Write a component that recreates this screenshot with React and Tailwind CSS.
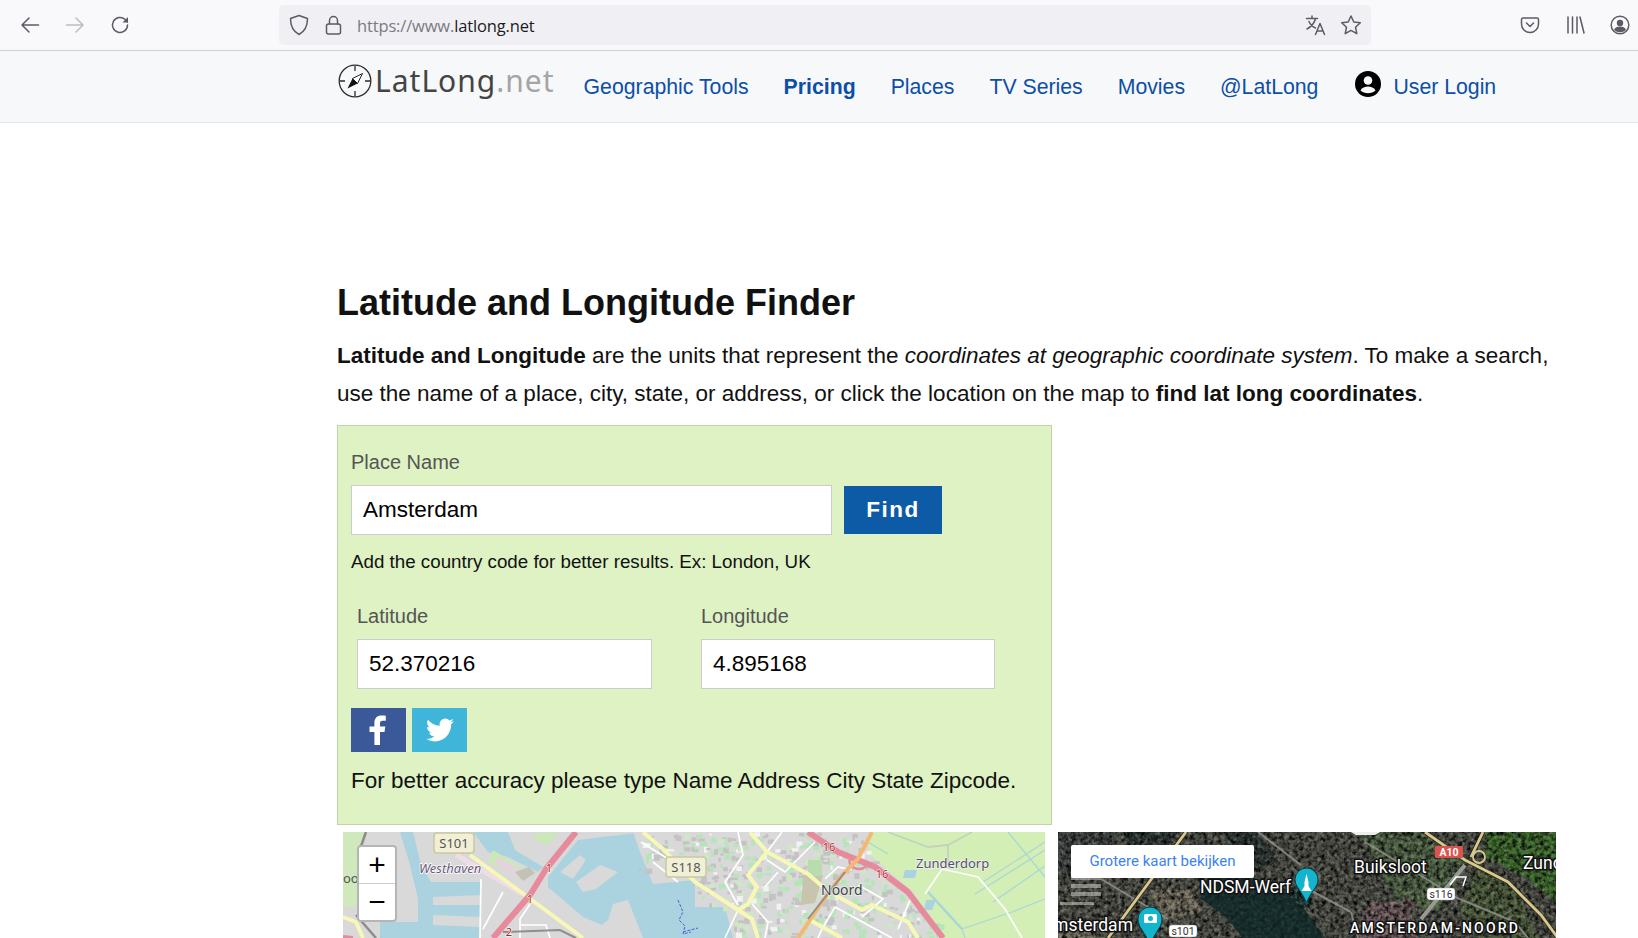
import React from "react";

const sans = "font-['Liberation_Sans',Arial,sans-serif]";

function Toolbar() {
  const s = { fill: "none", stroke: "#5b5b66", strokeWidth: 1.5, strokeLinecap: "round", strokeLinejoin: "round" };
  return (
    <div className="flex h-[51px] items-center border-b border-[#cfcfd4] bg-[#f9f9fb]">
      <div className="flex w-[279px] shrink-0 items-center pl-[20px]">
        <svg width="20" height="20" viewBox="0 0 20 20" {...s}><path d="M18.5 10H2M9 3 2 10l7 7" /></svg>
        <svg className="ml-[25px]" width="20" height="20" viewBox="0 0 20 20" {...s} stroke="#bdbdc2"><path d="M1.5 10H18M11 3l7 7-7 7" /></svg>
        <svg className="ml-[25px]" width="20" height="20" viewBox="0 0 20 20" {...s}><path d="M17.5 10a7.5 7.5 0 1 1-2.4-5.5L17.5 7" /><path d="M18 2v5.5h-5.5" fill="#5b5b66" stroke="none" /></svg>
      </div>
      <div className="flex h-[40px] w-[1092px] shrink-0 items-center rounded-[5px] bg-[#f0f0f4] pl-[10px] pr-[9px]">
        <svg width="20" height="22" viewBox="0 0 20 22" {...s}><path d="M10 1.5 18.5 4.5c0 7-2 12.5-8.500 16C3.500 17 1.500 11.500 1.500 4.500Z" /></svg>
        <svg className="ml-[16px]" width="17" height="20" viewBox="0 0 17 20" {...s}><rect x="1.500" y="9" width="14" height="10" rx="2" /><path d="M4.500 9V5.500a4 4 0 0 1 8 0V9" /></svg>
        <span className="ml-[15px] mt-[3px] font-['Open_Sans',sans-serif] text-[16.500px] tracking-[-0.150px] text-[#7a7a82]">https://www.<span className="text-[#1c1b22]">latlong.net</span></span>
        <svg className="ml-auto" width="22" height="22" viewBox="0 0 22 22" {...s}><path d="M1.500 4.500h11M7 2v2.500M10.500 4.500C9.500 9 6.500 12.500 2 15M4 7.500c1.500 3.500 4 5.500 6.500 6.500M10.500 20.500l4.500-11 4.500 11M12 17h6" /></svg>
        <svg className="ml-[13px]" width="22" height="22" viewBox="0 0 22 22" {...s}><path d="m11 2 2.800 6 6.500.8-4.800 4.400 1.300 6.500L11 16.400l-5.800 3.300 1.300-6.500L1.700 8.800l6.500-.8Z" /></svg>
      </div>
      <div className="flex flex-1 items-center pl-[149px]">
        <svg width="20" height="20" viewBox="0 0 20 20" {...s}><path d="M3 3h14a1.500 1.500 0 0 1 1.500 1.500V9a8.500 8.500 0 0 1-17 0V4.500A1.500 1.500 0 0 1 3 3Z" /><path d="m6.500 8 3.500 3.500L13.500 8" /></svg>
        <svg className="ml-[26px]" width="19" height="20" viewBox="0 0 19 20" {...s}><path d="M2 2v16M6.500 2v16M11 2v16M14 2l4 16" /></svg>
        <svg className="ml-[25px]" width="20" height="20" viewBox="0 0 20 20" {...s}><circle cx="10" cy="10" r="8.800" /><circle cx="10" cy="8" r="3.200" fill="#5b5b66" stroke="none" /><path d="M4 15c1-3 3-3.500 6-3.500s5 .5 6 3.500a8.800 8.800 0 0 1-12 0Z" fill="#5b5b66" stroke="none" /></svg>
      </div>
    </div>
  );
}

function Nav() {
  const item = "mt-[2px] text-[21.250px] text-[#0d4ea6] leading-none whitespace-nowrap";
  return (
    <div className={`flex h-[72px] items-center border-b border-[#e6e6e6] bg-[#f7f8fa] pl-[338px] ${sans}`}>
      <div className="-mt-[12px] flex items-center">
        <svg width="34" height="34" viewBox="0 0 34 34">
          <circle cx="17" cy="17" r="15.800" fill="none" stroke="#2b2b2b" strokeWidth="1.300" />
          <path d="M17 2v5M17 27v5M2 17h5M27 17h5" stroke="#2b2b2b" strokeWidth="1.300" />
          <path d="M24.500 9.500 19.500 19.500 14.500 14.500Z" fill="#fff" stroke="#222" strokeWidth="1" />
          <path d="M9.500 24.500 14.500 14.500 19.500 19.500Z" fill="#111" />
        </svg>
        <span className="ml-[3px] font-['Noto_Sans',sans-serif] text-[30px] leading-none tracking-[1px] text-[#444]">LatLong<span className="text-[#a5a5a5]">.net</span></span>
      </div>
      <a className={`ml-[29px] ${item}`}>Geographic Tools</a>
      <a className={`ml-[35px] font-bold ${item}`}>Pricing</a>
      <a className={`ml-[35px] ${item}`}>Places</a>
      <a className={`ml-[35px] ${item}`}>TV Series</a>
      <a className={`ml-[35px] ${item}`}>Movies</a>
      <a className={`ml-[35px] ${item}`}>@LatLong</a>
      <svg className="-mt-[5px] ml-[37px]" width="26" height="26" viewBox="0 0 26 26">
        <circle cx="13" cy="13" r="13" fill="#000" />
        <circle cx="13" cy="9.500" r="4.300" fill="#f7f8fa" />
        <path d="M5.500 19.500c1.500-3 4.500-4 7.500-4s6 1 7.500 4c-4 3.500-11 3.500-15 0Z" fill="#f7f8fa" />
      </svg>
      <a className={`ml-[12px] ${item}`}>User Login</a>
    </div>
  );
}

function Field({ label, value, w, ml }) {
  return (
    <div className={ml}>
      <div className="text-[20px] leading-[24px] text-[#555]">{label}</div>
      <div className={`mt-[11px] flex h-[50px] items-center border border-[#cccccc] bg-white pl-[11px] text-[22.500px] text-black ${w}`}>{value}</div>
    </div>
  );
}

function Panel() {
  return (
    <div className="h-[400px] w-[715px] border border-[#bcd7a5] bg-[#def2c4] pl-[13px] pt-[24px]">
      <div className="text-[20px] leading-[24px] text-[#555]">Place Name</div>
      <div className="mt-[11px] flex items-center">
        <div className="flex h-[50px] w-[481px] items-center border border-[#cccccc] bg-white pl-[11px] text-[22.500px] text-black">Amsterdam</div>
        <div className="ml-[12px] flex h-[48px] w-[98px] items-center justify-center bg-[#0d5aa7] text-[22.500px] font-bold tracking-[1.500px] text-white">Find</div>
      </div>
      <div className="mt-[12px] text-[18.750px] leading-[30px] text-[#111]">Add the country code for better results. Ex: London, UK</div>
      <div className="mt-[27px] flex">
        <Field label="Latitude" value="52.370216" w="w-[295px]" ml="ml-[6px]" />
        <Field label="Longitude" value="4.895168" w="w-[294px]" ml="ml-[49px]" />
      </div>
      <div className="mt-[19px] flex gap-[6px]">
        <div className="flex h-[44px] w-[55px] items-center justify-center bg-[#3b5998]">
          <svg className="-ml-[3px]" width="20" height="32" viewBox="0 0 20 30"><path d="M13 30V17h4.500l.8-5.500H13V8.500c0-1.600.5-2.700 2.800-2.700h3V.8C18.300.7 16.500.5 14.500.5 10.300.5 7.400 3 7.400 7.800v3.700H2.500V17h4.900v13Z" fill="#fff" /></svg>
        </div>
        <div className="flex h-[44px] w-[55px] items-center justify-center bg-[#3fb5d9]">
          <svg width="28" height="28" viewBox="0 0 24 24"><path d="M23.950 4.570a10 10 0 0 1-2.820.770 4.960 4.960 0 0 0 2.160-2.720c-.950.550-2 .950-3.130 1.180a4.920 4.920 0 0 0-8.380 4.480C7.690 8.090 4.070 6.130 1.640 3.160a4.820 4.820 0 0 0-.660 2.470c0 1.710.870 3.210 2.190 4.100a4.900 4.900 0 0 1-2.230-.620v.060a4.920 4.920 0 0 0 3.950 4.830c-.720.190-1.480.220-2.220.080a4.940 4.940 0 0 0 4.600 3.420A9.870 9.870 0 0 1 0 19.540a14 14 0 0 0 7.560 2.210c9.050 0 14-7.500 14-13.980 0-.210 0-.420-.020-.630a9.940 9.940 0 0 0 2.460-2.550z" fill="#fff" /></svg>
        </div>
      </div>
      <div className="mt-[14px] text-[22.500px] leading-[30px] text-[#111]">For better accuracy please type Name Address City State Zipcode.</div>
    </div>
  );
}

function seeded(n, seed, fn) {
  let v = seed;
  const r = () => { v = (v * 16807) % 2147483647; return v / 2147483647; };
  const out = [];
  for (let i = 0; i < n; i++) out.push(fn(r, i));
  return out;
}
function inUrban(x, y) {
  if (x > 385 && x < 520 && y > 0) return true;
  if (x > 352 && x <= 385 && y < 75) return true;
  if (x > 295 && x <= 352 && y < 42) return true;
  if (x >= 520 && x < 600 && y > 60 + (x - 565)) return true;
  return false;
}
const flecks = seeded(700, 9731, (r, i) => {
  const x = 290 + r() * 310, y = r() * 106, w = 2 + r() * 5, h = 2 + r() * 4, c = r();
  if (!inUrban(x, y)) return null;
  return <rect key={i} x={x} y={y} width={w} height={h} fill={c < 0.4 ? "#b5e5b8" : c < 0.75 ? "#c4c2c2" : c < 0.88 ? "#f2f2f2" : "#cde9c0"} />;
});

function OsmMap() {
  const white = { fill: "none", stroke: "#fff", strokeWidth: 1.700 };
  const label = { fontFamily: "'Noto Sans',sans-serif" };
  const shield = (x, y, t) => (
    <g>
      <rect x={x} y={y} width="40" height="20" rx="3" fill="#f1f0d7" stroke="#c9c89f" strokeWidth="1.500" />
      <text x={x + 20} y={y + 15} textAnchor="middle" fontSize="13" fill="#555" {...label}>{t}</text>
    </g>
  );
  return (
    <div className="relative h-[106px] w-[702px] overflow-hidden">
      <svg width="702" height="106" viewBox="0 0 702 106" className="block">
        <rect width="702" height="106" fill="#d9d9d9" />
        <g className="blur-[0.600px]">
          <path d="M0 0h22l-6 20 4 30-8 25H0Z" fill="#cfe8bc" />
          <path d="M57 0 70 0 78 33 88 50H138V63L90 65V73H137V85L90 83V93L137 95V106H37V90H75V67L67 33Z" fill="#aad3df" />
          <path d="M130 0H165L172 18 200 35 195 40 165 25 145 20Z" fill="#aad3df" />
          <path d="M235 8 300 0 352 40V106H290L240 85 205 55V45Z" fill="#aad3df" />
          <path d="M352 75h30l8 31h-38Z" fill="#aad3df" />
          <path d="M217 40 237 23 243 28 230 47ZM200 63 227 80 217 88 197 72ZM233 50 257 33 275 40 253 57 240 60ZM243 106 265 88 270 72 285 68 300 106Z" fill="#d9d9d9" />
          <path d="M290 0H352V48L310 52 297 20Z" fill="#d9d9d9" />
          <path d="M527 0H702V106H600L570 60 535 30 525 20Z" fill="#d3efb6" />
          <path d="M150 18 170 30 185 42 165 40 145 30ZM190 2 215 0 205 12 195 10Z" fill="#cbe9b6" />
          <path d="M155 25l22 13-6 5-20-12Z" fill="#e6d2de" />
          <path d="M172 40l14-5 6 6-12 8Z" fill="#c4c2b4" />
          {flecks}
          <path d="M460 43h20l-8 28-14 2Z" fill="#c8c5ae" />
          <path d="M465 28h14v16h-14Z" fill="#b8dcae" />
          <path d="M522 27l8 4-3 6-8-3ZM562 38h12l-2 8h-12ZM583 68h10l-4 10h-8Z" fill="#aad3df" />
          <path d="M585 60 619 97 622 106M619 97 669 80 702 67M632 62 702 18M640 50 702 10M650 70 702 34M665 0 702 45M525 10 545 22" stroke="#a8d6d8" strokeWidth="1.200" fill="none" />
          <path d="M585 60l34 37" stroke="#a8d6d8" strokeWidth="2.500" fill="none" />
          <path d="M545 0 585 15 605 13 629 0M605 13V33" stroke="#c4d1bd" strokeWidth="1.800" fill="none" />
          <path d="M599 37 582 62M599 37 635 45 662 77 679 106M567 68 555 97" {...white} />
          <path d="M395 0 400 23 382 50 395 73M472 10 442 40 424 28M439 0 424 20M435 40 422 55M409 72 425 90 422 106M395 78 382 106M492 75 525 93 549 106M492 75 479 97 475 106M515 53 540 67 519 85M482 47 495 35 509 38M138 47 137 106M160 60 140 97M177 106V87L187 72M177 93H203L207 106M298 10 330 30M310 30 335 50" {...white} />
          <path d="M113 23 180 62" stroke="#eedce6" strokeWidth="5" fill="none" />
          <path d="M127 23 182 63 240 106M300 0 320 17 352 50 395 78 409 87 415 106M407 0 424 20 465 42 480 55M424 20 405 43 414 55 405 72 395 78M492 63 519 78 529 73 565 90 575 106M465 87 499 106M0 85 13 90 20 106" fill="none" stroke="#f7f8b6" strokeWidth="4" />
          <path d="M23 0 16 20M13 83 33 106" stroke="#8c8c8c" strokeWidth="2.500" fill="none" />
          <path d="M160 100 217 98 233 106" stroke="#8f8f8f" strokeWidth="2" fill="none" />
          <path d="M0 105 10 106" stroke="#e68a9c" strokeWidth="4" fill="none" />
          <path d="M233 0 203 37 187 63 150 106M465 0 495 20 532 35 565 60 600 106" fill="none" stroke="#e68a9c" strokeWidth="6" strokeLinejoin="round" />
          <path d="M507 27a9 7 0 1 0 18 5" fill="none" stroke="#e68a9c" strokeWidth="2.500" />
          <path d="M529 0 515 27 499 43 479 70 455 106" fill="none" stroke="#f5b871" strokeWidth="4" />
          <path d="M502 40 465 87" fill="none" stroke="#8e8e8e" strokeWidth="2" />
          <path d="M335 68l5 12-4 8 6 6-2 8 8-2M340 100l15-4" stroke="#3a66d0" strokeWidth="1" strokeDasharray="3 1.500" fill="none" />
        </g>
        {shield(91, 1, "S101")}
        {shield(323, 25, "S118")}
        <text x="76" y="41" fontSize="13" fontStyle="italic" fill="#6a5a7a" stroke="#fff" strokeWidth="1.500" paintOrder="stroke" {...label}>Westhaven</text>
        <text x="573" y="36" fontSize="13" fill="#555" stroke="#eef" strokeWidth="1.500" paintOrder="stroke" {...label}>Zunderdorp</text>
        <text x="478" y="63" fontSize="14" fill="#444" stroke="#eee" strokeWidth="1.500" paintOrder="stroke" {...label}>Noord</text>
        <text x="0" y="51" fontSize="13" fill="#555" {...label}>oor</text>
        <text x="206" y="40" fontSize="11" textAnchor="middle" fill="#a22" stroke="#fff" strokeWidth="1" paintOrder="stroke" {...label}>1</text>
        <text x="187" y="71" fontSize="11" textAnchor="middle" fill="#a22" stroke="#fff" strokeWidth="1" paintOrder="stroke" {...label}>1</text>
        <text x="166" y="104" fontSize="11" textAnchor="middle" fill="#a22" stroke="#fff" strokeWidth="1" paintOrder="stroke" {...label}>2</text>
        <text x="486" y="19" fontSize="11" textAnchor="middle" fill="#a22" stroke="#fff" strokeWidth="1" paintOrder="stroke" {...label}>16</text>
        <text x="539" y="46" fontSize="11" textAnchor="middle" fill="#a22" stroke="#fff" strokeWidth="1" paintOrder="stroke" {...label}>16</text>
      </svg>
      <div className="absolute left-[14px] top-[13px] flex w-[40px] flex-col overflow-hidden rounded-[4px] border-2 border-[#b5b5b5] bg-white">
        <div className="flex h-[37px] items-center justify-center border-b border-[#ccc] text-[30px] leading-none text-black">+</div>
        <div className="flex h-[36px] items-center justify-center text-[30px] leading-none text-black">−</div>
      </div>
    </div>
  );
}

function SatMap() {
  const t = { fontFamily: "Roboto,sans-serif", fill: "#fff", stroke: "#111", strokeWidth: 3, paintOrder: "stroke" };
  const pin = (x, y, w, h) => (
    <g transform={`translate(${x} ${y})`}>
      <path d={`M${w / 2} ${h}C${w * 0.3} ${h * 0.65} 0 ${h * 0.55} 0 ${w / 2}a${w / 2} ${w / 2} 0 0 1 ${w} 0C${w} ${h * 0.55} ${w * 0.7} ${h * 0.65} ${w / 2} ${h}Z`} fill="#12b5cb" stroke="#0b3d47" strokeWidth="1" />
    </g>
  );
  const sh = (x, y, w, s) => (
    <g>
      <rect x={x} y={y} width={w} height="12" rx="3" fill="#fff" stroke="#999" strokeWidth=".5" />
      <text x={x + w / 2} y={y + 10} textAnchor="middle" fontSize="10.500" fontFamily="Roboto,sans-serif" fill="#333">{s}</text>
    </g>
  );
  return (
    <div className="relative h-[106px] w-[498px] overflow-hidden">
      <svg width="498" height="106" viewBox="0 0 498 106" className="block">
        <defs>
          <filter id="noise" x="0" y="0" width="100%" height="100%">
            <feTurbulence type="fractalNoise" baseFrequency="0.22" numOctaves="3" seed="4" />
            <feColorMatrix type="matrix" values="0 0 0 0 0  0 0 0 0 0  0 0 0 0 0  2.200 0 0 0 -0.800" />
          </filter>
          <filter id="noiseL" x="0" y="0" width="100%" height="100%">
            <feTurbulence type="fractalNoise" baseFrequency="0.3" numOctaves="2" seed="11" />
            <feColorMatrix type="matrix" values="0 0 0 0 1  0 0 0 0 .95  0 0 0 0 .88  0 1.800 0 0 -0.800" />
          </filter>
        </defs>
        <rect width="498" height="106" fill="#4d5047" />
        <path d="M0 0h60l-20 40H0Z" fill="#3c4240" />
        <path d="M427 0h71v70l-30-25-40-20Z" fill="#3a6a28" />
        <path d="M300 0h70l40 30-30 50-40-10Z" fill="#4e6444" />
        <path d="M420 35l40 25 20 46h-60l-20-30Z" fill="#4b5c3a" />
        <path d="M310 70h40l10 36h-60ZM345 65l15 5-8 12Z" fill="#6f5a5c" />
        <path d="M150 45l22-5 45 12 30 26 20 28h-82l-18-22-25-18ZM216 60l30-8 10 20-20 8Z" fill="#1a3331" />
        <path d="M65 0H120L95 35 75 30ZM165 0H200l20 30-30 10Z" fill="#2a3532" />
        <path d="M92 58h40l12 22-40 8ZM0 90h45l-8 16H0Z" fill="#756f60" />
        <rect width="498" height="106" filter="url(#noise)" />
        <rect width="498" height="106" filter="url(#noiseL)" opacity=".35" />
        <path d="M150 45l22-5 45 12 30 26 20 28h-82l-18-22-25-18Z" fill="#142c2b" opacity=".65" />
        <path d="M13 43h30v5H13ZM13 52h30v4H13ZM13 60h30v4H13ZM2 70h34v3H2Z" fill="#c9c9c2" opacity=".55" />
        <path d="M200 0 243 33M43 47 110 87M250 57 293 80M307 10 370 48 397 65 457 90 470 106M293 80 300 106" fill="none" stroke="#8e8f88" strokeWidth="2" opacity=".85" />
        <path d="M407 33 363 87" fill="none" stroke="#9a9a95" strokeWidth="4" />
        <path d="M128 0 50 106M367 0 407 28 450 50 483 83 500 106M425 0 413 25" fill="none" stroke="#2a2a20" strokeWidth="4.500" />
        <path d="M128 0 50 106M367 0 407 28 450 50 483 83 500 106M425 0 413 25" fill="none" stroke="#d8c88e" strokeWidth="2.800" />
        <circle cx="421" cy="25" r="6" fill="none" stroke="#d8c88e" strokeWidth="1.800" />
        <path d="M392 53l6-8h10l-3 9" fill="none" stroke="#fff" strokeWidth="1.500" />
        <path d="M293 0h29l-5 3h-19Z" fill="#eee" />
        <rect x="377" y="14" width="28" height="12" rx="1" fill="#d9534f" />
        <text x="391" y="24" textAnchor="middle" fontSize="10.500" fontWeight="700" fontFamily="Roboto,sans-serif" fill="#fff">A10</text>
        {sh(369, 56, 28, "s116")}
        {sh(111, 93, 28, "s101")}
        {pin(237, 36, 23, 35)}
        <path d="M248.500 42l2 8v4l3 5h-10l3-5v-4Z" fill="#fff" />
        {pin(80, 75, 24, 38)}
        <rect x="86" y="82" width="13" height="9" rx="1.500" fill="#fff" />
        <circle cx="92.500" cy="86.500" r="2.500" fill="#12b5cb" />
        <text x="142" y="61" fontSize="17.500" {...t}>NDSM-Werf</text>
        <text x="296" y="41" fontSize="17.500" {...t}>Buiksloot</text>
        <text x="465" y="37" fontSize="17.500" {...t}>Zunderdorp</text>
        <text x="75" y="99" fontSize="17.500" textAnchor="end" {...t}>Amsterdam</text>
        <text x="292" y="101" fontSize="14" fontWeight="500" letterSpacing="2.150" {...t}>AMSTERDAM-NOORD</text>
      </svg>
      <div className="absolute left-[13px] top-[13px] flex h-[33px] w-[183px] items-center justify-center rounded-[2px] bg-white font-['Roboto',sans-serif] text-[15px] text-[#3b82f6]">Grotere kaart bekijken</div>
    </div>
  );
}

export default function App() {
  return (
    <div className={`h-[938px] w-[1638px] overflow-hidden bg-white ${sans}`}>
      <Toolbar />
      <Nav />
      <div className="pl-[337px]">
        <h1 className="pt-[159px] text-[36px] font-bold leading-[42px] text-[#111]">Latitude and Longitude Finder</h1>
        <p className="mt-[13px] w-[1240px] text-[22.500px] leading-[38px] text-[#111]">
          <b>Latitude and Longitude</b> are the units that represent the <i>coordinates at geographic coordinate system</i>. To make a search, use the name of a place, city, state, or address, or click the location on the map to <b>find lat long coordinates</b>.
        </p>
        <div className="mt-[12px]"><Panel /></div>
        <div className="ml-[6px] mt-[7px] flex gap-[13px]">
          <OsmMap />
          <SatMap />
        </div>
      </div>
    </div>
  );
}
